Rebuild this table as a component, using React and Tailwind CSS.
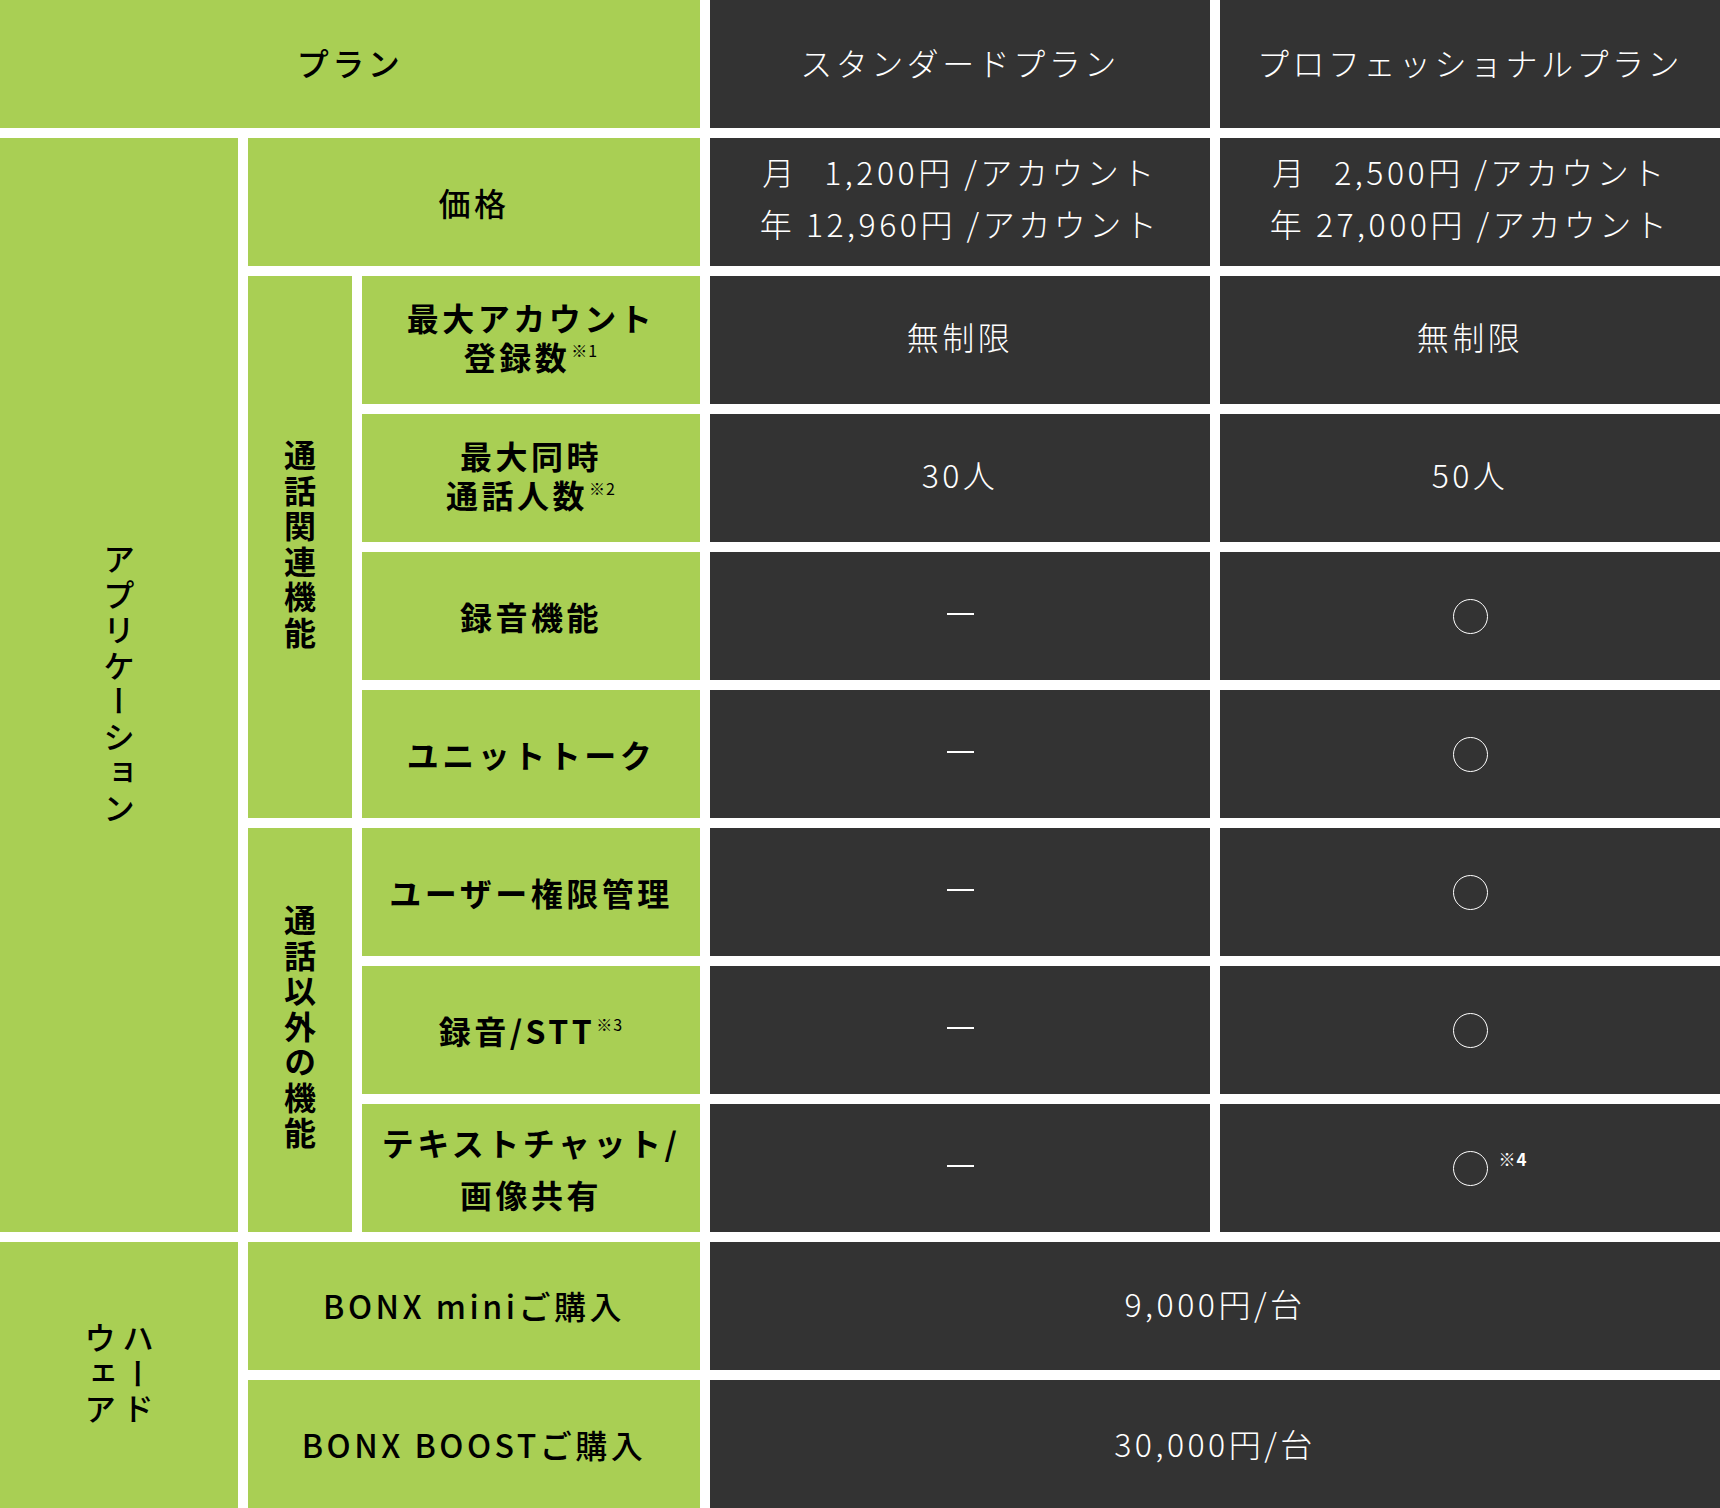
const FONT = "font-['Noto_Sans_CJK_JP','Noto_Sans',sans-serif]";

const green = "bg-[#a9cf54] text-black flex items-center justify-center text-center";
const dark = "bg-[#333333] text-white flex items-center justify-center text-center font-light";

const Sup = ({ children }) => (
  <span className="relative -top-[13px] ml-[1px] text-[16px] font-normal tracking-[1px]">{children}</span>
);

const Gap = () => <span className="tracking-[-5.5px]">　</span>;

const Dash = () => <span className="block w-[27px] h-[2px] bg-white mb-[4px]" />;

const Circle = ({ note }) => (
  <span className="relative block w-[35px] h-[35px] rounded-full border-[1.5px] border-white">
    {note && (
      <span className="absolute left-[45px] -top-[2px] text-[17px] font-bold tracking-[1px] leading-none whitespace-nowrap">
        {note}
      </span>
    )}
  </span>
);

const features = [
  { label: <>最大アカウント<br />登録数<Sup>※1</Sup></>, std: '無制限', pro: '無制限', lh: 'leading-[39px]' },
  { label: <>最大同時<br />通話人数<Sup>※2</Sup></>, std: '30人', pro: '50人', lh: 'leading-[39px]' },
  { label: '録音機能', std: <Dash />, pro: <Circle /> },
  { label: 'ユニットトーク', std: <Dash />, pro: <Circle /> },
  { label: 'ユーザー権限管理', std: <Dash />, pro: <Circle /> },
  { label: <>録音/STT<Sup>※3</Sup></>, std: <Dash />, pro: <Circle /> },
  { label: <>テキストチャット/<br />画像共有</>, std: <Dash />, pro: <Circle note="※4" />, lh: 'leading-[52px]' },
];

const Row = ({ f }) => {
  const textCell = typeof f.std === 'string' ? 'pb-[8px]' : '';
  return (
    <>
      <div className={`${green} font-bold ${f.lh || ''}`}>
        <p>{f.label}</p>
      </div>
      <div className={`${dark} ${textCell}`}>{f.std}</div>
      <div className={`${dark} ${textCell}`}>{f.pro}</div>
    </>
  );
};

const App = () => {
  return (
    <div className={`${FONT} w-[1720px] h-[1508px] bg-white text-[32px] tracking-[3.5px]`}>
      <div className="grid grid-cols-[238px_104px_338px_500px_500px] grid-rows-[repeat(11,128px)] gap-[10px]">
        {/* header */}
        <div className={`${green} col-span-3 font-medium pb-[5px]`}>プラン</div>
        <div className={`${dark} pb-[5px]`}>スタンダードプラン</div>
        <div className={`${dark} pb-[5px]`}>プロフェッショナルプラン</div>

        {/* application group */}
        <div className={`${green} row-span-8 font-medium`}>
          <span className="[writing-mode:vertical-rl]">アプリケーション</span>
        </div>

        <div className={`${green} col-span-2 font-medium`}>価格</div>
        <div className={`${dark} leading-[52px] pb-[10px]`}>
          <p>月<Gap />1,200円 /アカウント<br />年 12,960円 /アカウント</p>
        </div>
        <div className={`${dark} leading-[52px] pb-[10px]`}>
          <p>月<Gap />2,500円 /アカウント<br />年 27,000円 /アカウント</p>
        </div>

        <div className={`${green} row-span-4 font-bold`}>
          <span className="[writing-mode:vertical-rl] leading-none mb-[4px]">通話関連機能</span>
        </div>
        {features.slice(0, 4).map((f, i) => (
          <Row key={i} f={f} />
        ))}

        <div className={`${green} row-span-3 font-bold`}>
          <span className="[writing-mode:vertical-rl] leading-none mb-[4px]">通話以外の機能</span>
        </div>
        {features.slice(4).map((f, i) => (
          <Row key={i} f={f} />
        ))}

        {/* hardware */}
        <div className={`${green} row-span-2 font-medium`}>
          <span className="[writing-mode:vertical-rl] leading-[38px]">ハード<br />ウェア</span>
        </div>
        <div className={`${green} col-span-2 font-medium pb-[3px]`}>BONX miniご購入</div>
        <div className={`${dark} col-span-2 pb-[7px]`}>9,000円/台</div>
        <div className={`${green} col-span-2 font-medium`}>BONX BOOSTご購入</div>
        <div className={`${dark} col-span-2 pb-[3px]`}>30,000円/台</div>
      </div>
    </div>
  );
};

export default App;
